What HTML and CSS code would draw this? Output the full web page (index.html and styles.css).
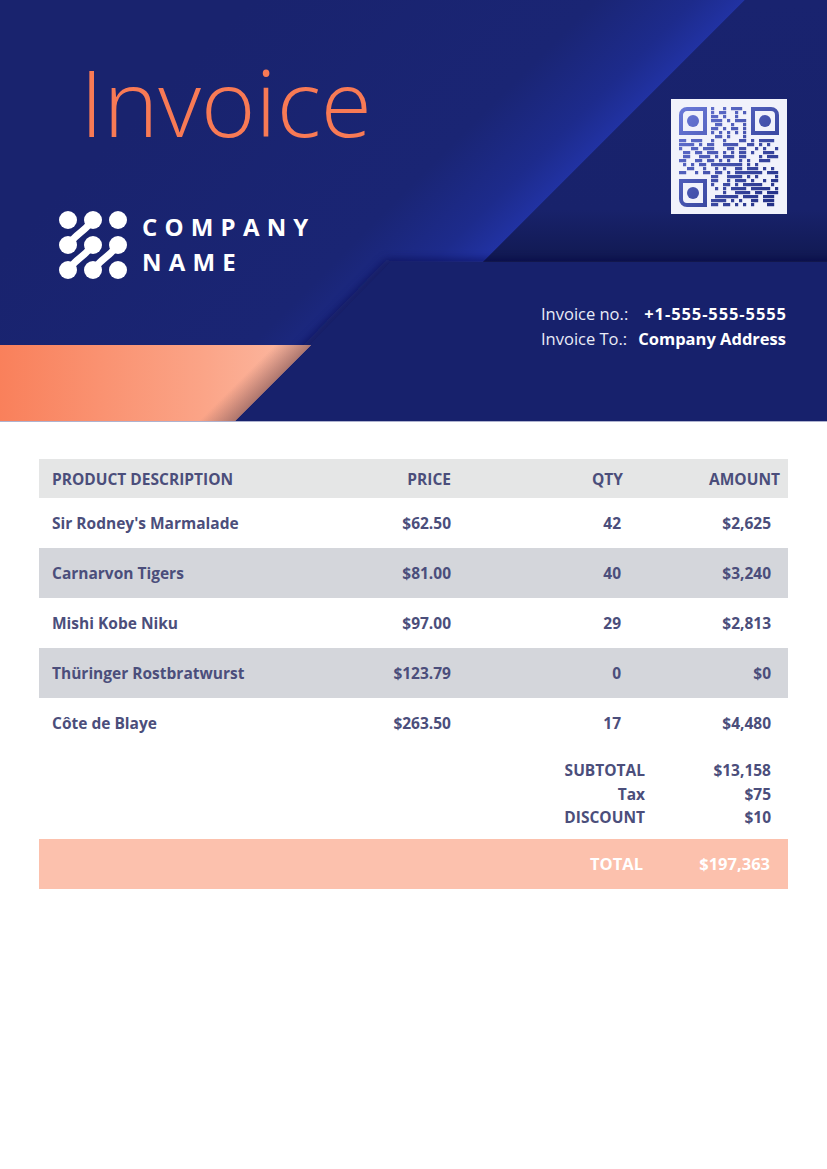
FILE: index.html
```html
<!DOCTYPE html>
<html lang="en">
<head>
<meta charset="utf-8">
<title>Invoice</title>
<link rel="stylesheet" href="styles.css">
</head>
<body>
<header class="hero">
  <svg class="hero-bg" viewBox="0 0 827 421" preserveAspectRatio="none" aria-hidden="true">
    <defs>
      <linearGradient id="gA" gradientUnits="userSpaceOnUse" x1="300" y1="-50" x2="547" y2="197">
        <stop offset="0" stop-color="#19236e"/>
        <stop offset="0.7" stop-color="#1a2574"/>
        <stop offset="0.9" stop-color="#1d2b8c"/>
        <stop offset="1" stop-color="#2132a2"/>
      </linearGradient>
      <linearGradient id="gTR" x1="0" y1="0" x2="0" y2="1">
        <stop offset="0" stop-color="#19236f"/>
        <stop offset="0.8" stop-color="#18226b"/>
        <stop offset="1" stop-color="#111951"/>
      </linearGradient>
      <linearGradient id="gOr" gradientUnits="userSpaceOnUse" x1="0" y1="0" x2="311" y2="0">
        <stop offset="0" stop-color="#f9805b"/>
        <stop offset="0.65" stop-color="#fba487"/>
        <stop offset="1" stop-color="#fcbba5"/>
      </linearGradient>
      <linearGradient id="gEdge" gradientUnits="userSpaceOnUse" x1="135" y1="485" x2="153" y2="503">
        <stop offset="0" stop-color="#a06c66" stop-opacity="0"/>
        <stop offset="1" stop-color="#a06c66" stop-opacity="0.85"/>
      </linearGradient>
      <filter id="blur" x="-10%" y="-10%" width="120%" height="120%"><feGaussianBlur stdDeviation="5"/></filter>
    </defs>
    <rect width="827" height="421" fill="#19236e"/>
    <polygon points="0,0 745,0 483,262 390,262 235,421 0,421" fill="url(#gA)"/>
    <polygon points="745,0 827,0 827,262 483,262" fill="url(#gTR)"/>
    <path d="M226 430 L388 264 L840 264" stroke="#0a0f42" stroke-width="8" fill="none" filter="url(#blur)" opacity="0.65"/>
    <polygon points="390,262 827,262 827,421 235,421" fill="#17216c"/>
    <polygon points="0,345 311,345 235,421 0,421" fill="url(#gOr)"/>
    <polygon points="0,345 311,345 235,421 0,421" fill="url(#gEdge)"/>
  </svg>

  <div class="hero-content">
    <div class="hero-left">
      <h1 class="title">Invoice</h1>
      <div class="brand">
        <svg class="brand-logo" viewBox="0 0 70 70" aria-hidden="true">
          <g fill="#ffffff">
            <circle cx="10" cy="10" r="9"/><circle cx="35" cy="10" r="9"/><circle cx="60" cy="10" r="9"/>
            <circle cx="10" cy="35" r="9"/><circle cx="35" cy="35" r="9"/><circle cx="60" cy="35" r="9"/>
            <circle cx="10" cy="60" r="9"/><circle cx="35" cy="60" r="9"/><circle cx="60" cy="60" r="9"/>
          </g>
          <g fill="none" stroke="#ffffff" stroke-width="7" stroke-linecap="round">
            <path d="M33 12 C 26 22, 19 23, 12 33"/>
            <path d="M33 37 C 26 47, 19 48, 12 58"/>
            <path d="M58 37 C 51 47, 44 48, 37 58"/>
          </g>
        </svg>
        <div class="brand-name">COMPANY<br>NAME</div>
      </div>
    </div>
    <div class="hero-right">
      <div class="qr">
        <svg viewBox="-2 -2 29 29" aria-hidden="true">
          <defs>
            <linearGradient id="gQ" gradientUnits="userSpaceOnUse" x1="0" y1="0" x2="25" y2="25">
              <stop offset="0" stop-color="#6b7ad9"/>
              <stop offset="1" stop-color="#1f2c82"/>
            </linearGradient>
          </defs>
          <g fill="none" stroke="url(#gQ)" stroke-width="1">
            <path d="M0.5 6.5V2A1.5 1.5 0 0 1 2 0.5H6.5V6.5Z"/>
            <path d="M18.5 0.5H23A1.5 1.5 0 0 1 24.5 2V6.5H18.5Z"/>
            <path d="M0.5 18.5H6.5V24.5H2A1.5 1.5 0 0 1 0.5 23Z"/>
          </g>
          <g fill="url(#gQ)">
            <circle cx="3.5" cy="3.5" r="1.5"/>
            <circle cx="21.5" cy="3.5" r="1.5"/>
            <circle cx="3.5" cy="21.5" r="1.5"/>
            <path d="M8 0h.8v.8h-.8zM11 0h.8v.8h-.8zM13 0h2.8v.8h-2.8z
            M8 1h.8v.8h-.8zM10 1h1.8v.8h-1.8zM14 1h.8v.8h-.8zM16 1h.8v.8h-.8z
            M8 2h1.8v.8h-1.8zM11 2h.8v.8h-.8zM14 2h.8v.8h-.8z
            M8 3h2.8v.8h-2.8zM12 3h.8v.8h-.8zM14 3h2.8v.8h-2.8z
            M9 4h1.8v.8h-1.8zM13 4h.8v.8h-.8zM16 4h.8v.8h-.8z
            M8 5h1.8v.8h-1.8zM11 5h.8v.8h-.8zM13 5h1.8v.8h-1.8zM16 5h.8v.8h-.8z
            M8 6h.8v.8h-.8zM10 6h.8v.8h-.8zM12 6h.8v.8h-.8zM14 6h.8v.8h-.8zM16 6h.8v.8h-.8z
            M9 7h1.8v.8h-1.8zM12 7h.8v.8h-.8zM16 7h.8v.8h-.8z
            M0 8h1.8v.8h-1.8zM3 8h2.8v.8h-2.8zM8 8h.8v.8h-.8zM11 8h.8v.8h-.8zM15 8h1.8v.8h-1.8zM18 8h.8v.8h-.8zM20 8h3.8v.8h-3.8z
            M0 9h3.8v.8h-3.8zM5 9h.8v.8h-.8zM7 9h1.8v.8h-1.8zM11 9h3.8v.8h-3.8zM17 9h1.8v.8h-1.8zM20 9h.8v.8h-.8zM22 9h.8v.8h-.8z
            M0 10h.8v.8h-.8zM3 10h1.8v.8h-1.8zM6 10h2.8v.8h-2.8zM12 10h1.8v.8h-1.8zM15 10h1.8v.8h-1.8zM19 10h.8v.8h-.8zM21 10h.8v.8h-.8zM24 10h.8v.8h-.8z
            M1 11h1.8v.8h-1.8zM4 11h1.8v.8h-1.8zM7 11h2.8v.8h-2.8zM11 11h.8v.8h-.8zM13 11h.8v.8h-.8zM15 11h1.8v.8h-1.8zM18 11h.8v.8h-.8zM21 11h2.8v.8h-2.8z
            M1 12h1.8v.8h-1.8zM5 12h2.8v.8h-2.8zM9 12h.8v.8h-.8zM11 12h2.8v.8h-2.8zM15 12h1.8v.8h-1.8zM20 12h.8v.8h-.8zM22 12h2.8v.8h-2.8z
            M0 13h1.8v.8h-1.8zM4 13h1.8v.8h-1.8zM7 13h1.8v.8h-1.8zM10 13h.8v.8h-.8zM12 13h.8v.8h-.8zM15 13h.8v.8h-.8zM17 13h.8v.8h-.8zM20 13h2.8v.8h-2.8z
            M1 14h.8v.8h-.8zM3 14h.8v.8h-.8zM5 14h1.8v.8h-1.8zM8 14h7.8v.8h-7.8zM17 14h.8v.8h-.8zM19 14h.8v.8h-.8z
            M2 15h1.8v.8h-1.8zM6 15h.8v.8h-.8zM9 15h.8v.8h-.8zM11 15h.8v.8h-.8zM14 15h1.8v.8h-1.8zM17 15h2.8v.8h-2.8zM21 15h.8v.8h-.8zM23 15h.8v.8h-.8z
            M0 16h1.8v.8h-1.8zM4 16h.8v.8h-.8zM6 16h1.8v.8h-1.8zM9 16h1.8v.8h-1.8zM12 16h.8v.8h-.8zM14 16h6.8v.8h-6.8zM22 16h2.8v.8h-2.8z
            M8 17h1.8v.8h-1.8zM12 17h3.8v.8h-3.8zM17 17h.8v.8h-.8zM19 17h.8v.8h-.8zM24 17h.8v.8h-.8z
            M8 18h1.8v.8h-1.8zM12 18h.8v.8h-.8zM14 18h2.8v.8h-2.8zM18 18h.8v.8h-.8zM21 18h.8v.8h-.8zM23 18h1.8v.8h-1.8z
            M8 19h.8v.8h-.8zM11 19h1.8v.8h-1.8zM14 19h.8v.8h-.8zM16 19h4.8v.8h-4.8zM23 19h.8v.8h-.8z
            M9 20h.8v.8h-.8zM11 20h.8v.8h-.8zM13 20h3.8v.8h-3.8zM18 20h4.8v.8h-4.8zM24 20h.8v.8h-.8z
            M11 21h.8v.8h-.8zM14 21h3.8v.8h-3.8zM19 21h1.8v.8h-1.8zM22 21h2.8v.8h-2.8z
            M9 22h5.8v.8h-5.8zM16 22h3.8v.8h-3.8zM21 22h2.8v.8h-2.8z
            M8 23h3.8v.8h-3.8zM13 23h.8v.8h-.8zM15 23h.8v.8h-.8zM18 23h1.8v.8h-1.8zM21 23h2.8v.8h-2.8z
            M8 24h1.8v.8h-1.8zM11 24h1.8v.8h-1.8zM14 24h.8v.8h-.8zM16 24h.8v.8h-.8zM18 24h.8v.8h-.8zM22 24h1.8v.8h-1.8z"/>
          </g>
        </svg>
      </div>
      <dl class="meta">
        <dt>Invoice no.:</dt><dd class="phone">+1-555-555-5555</dd>
        <dt>Invoice To.:</dt><dd>Company Address</dd>
      </dl>
    </div>
  </div>
</header>

<main class="sheet">
  <div class="items">
    <div class="row head">
      <span class="c-desc">PRODUCT DESCRIPTION</span>
      <span class="c-price">PRICE</span>
      <span class="c-qty">QTY</span>
      <span class="c-amt">AMOUNT</span>
    </div>
    <div class="row">
      <span class="c-desc">Sir Rodney's Marmalade</span>
      <span class="c-price">$62.50</span>
      <span class="c-qty">42</span>
      <span class="c-amt">$2,625</span>
    </div>
    <div class="row alt">
      <span class="c-desc">Carnarvon Tigers</span>
      <span class="c-price">$81.00</span>
      <span class="c-qty">40</span>
      <span class="c-amt">$3,240</span>
    </div>
    <div class="row">
      <span class="c-desc">Mishi Kobe Niku</span>
      <span class="c-price">$97.00</span>
      <span class="c-qty">29</span>
      <span class="c-amt">$2,813</span>
    </div>
    <div class="row alt">
      <span class="c-desc">Thüringer Rostbratwurst</span>
      <span class="c-price">$123.79</span>
      <span class="c-qty">0</span>
      <span class="c-amt">$0</span>
    </div>
    <div class="row">
      <span class="c-desc">Côte de Blaye</span>
      <span class="c-price">$263.50</span>
      <span class="c-qty">17</span>
      <span class="c-amt">$4,480</span>
    </div>
  </div>

  <div class="totals">
    <span class="t-label">SUBTOTAL</span><span class="t-value">$13,158</span>
    <span class="t-label">Tax</span><span class="t-value">$75</span>
    <span class="t-label">DISCOUNT</span><span class="t-value">$10</span>
  </div>

  <div class="grand">
    <span class="g-label">TOTAL</span><span class="g-value">$197,363</span>
  </div>
</main>
</body>
</html>
```

FILE: styles.css
```css
* { box-sizing: border-box; }

html, body {
  margin: 0;
  padding: 0;
  background: #ffffff;
}

body {
  width: 827px;
  font-family: "Open Sans", "Noto Sans", "DejaVu Sans", sans-serif;
  color: #4b4e7b;
}

/* ---------- header ---------- */
.hero {
  position: relative;
  height: 422px;
  border-bottom: 1px solid #aeb2cf;
  overflow: hidden;
}

.hero-bg {
  position: absolute;
  left: 0;
  top: 0;
  width: 827px;
  height: 421px;
  display: block;
}

.hero-content {
  position: relative;
  z-index: 1;
  display: flex;
  justify-content: space-between;
  align-items: flex-start;
  padding: 55px 41px 0 58px;
}

.hero-left {
  display: flex;
  flex-direction: column;
}

.title {
  margin: 0 0 0 22px;
  font-family: "Open Sans", "Noto Sans", sans-serif;
  font-weight: 350;
  font-size: 93px;
  line-height: 92px;
  color: #f87a55;
  letter-spacing: 0;
}

.brand {
  margin-top: 63px;
  display: flex;
  align-items: flex-start;
  gap: 14px;
}

.brand-logo {
  width: 70px;
  height: 70px;
  display: block;
}

.brand-name {
  margin-top: -1px;
  font-weight: 700;
  font-size: 24px;
  line-height: 35px;
  letter-spacing: 7.2px;
  color: #ffffff;
}

.hero-right {
  display: flex;
  flex-direction: column;
  align-items: flex-end;
}

.qr {
  margin-top: 44px;
  margin-right: -1px;
  width: 116px;
  height: 115px;
  background: #f1f2fb;
  display: flex;
  align-items: center;
  justify-content: center;
}

.qr svg {
  width: 116px;
  height: 116px;
  display: block;
}

.meta {
  margin: 87px 0 0 0;
  display: grid;
  grid-template-columns: auto auto;
  column-gap: 10px;
  align-items: baseline;
  font-size: 16.5px;
  line-height: 25px;
  color: #ffffff;
}

.meta dt {
  font-weight: 400;
  color: #e9ebf7;
}

.meta dd {
  margin: 0;
  font-weight: 700;
  font-size: 16.5px;
  text-align: right;
}

.meta .phone {
  letter-spacing: 0.9px;
  margin-right: -0.9px;
}

/* ---------- items ---------- */
.sheet {
  padding: 37px 39px 0 39px;
}

.items {
  display: flex;
  flex-direction: column;
}

.row {
  display: grid;
  grid-template-columns: 261px 164px 172px 1fr;
  align-items: center;
  height: 50px;
  font-size: 15.5px;
  font-weight: 700;
  color: #4b4e7b;
}

.row.head {
  height: 39px;
  background: #e5e6e6;
}

.row.alt {
  background: #d4d6db;
}

.c-desc {
  padding-left: 13px;
}

.c-price {
  text-align: right;
  padding-right: 13px;
}

.c-qty {
  text-align: right;
  padding-right: 15px;
}

.c-amt {
  text-align: right;
  padding-right: 17px;
}

.row.head .c-qty { padding-right: 13px; }
.row.head .c-amt { padding-right: 8px; }

/* ---------- totals ---------- */
.totals {
  display: grid;
  grid-template-columns: 1fr 143px;
  padding-top: 11px;
  font-size: 15.5px;
  font-weight: 700;
  line-height: 23.5px;
}

.t-label {
  text-align: right;
}

.t-value {
  text-align: right;
  padding-right: 17px;
}

.grand {
  margin-top: 9px;
  height: 50px;
  background: #fcc1ad;
  display: grid;
  grid-template-columns: 1fr 145px;
  align-items: center;
  font-size: 16.5px;
  font-weight: 700;
  color: #ffffff;
}

.g-label {
  text-align: right;
}

.g-value {
  text-align: right;
  padding-right: 18px;
}
```
